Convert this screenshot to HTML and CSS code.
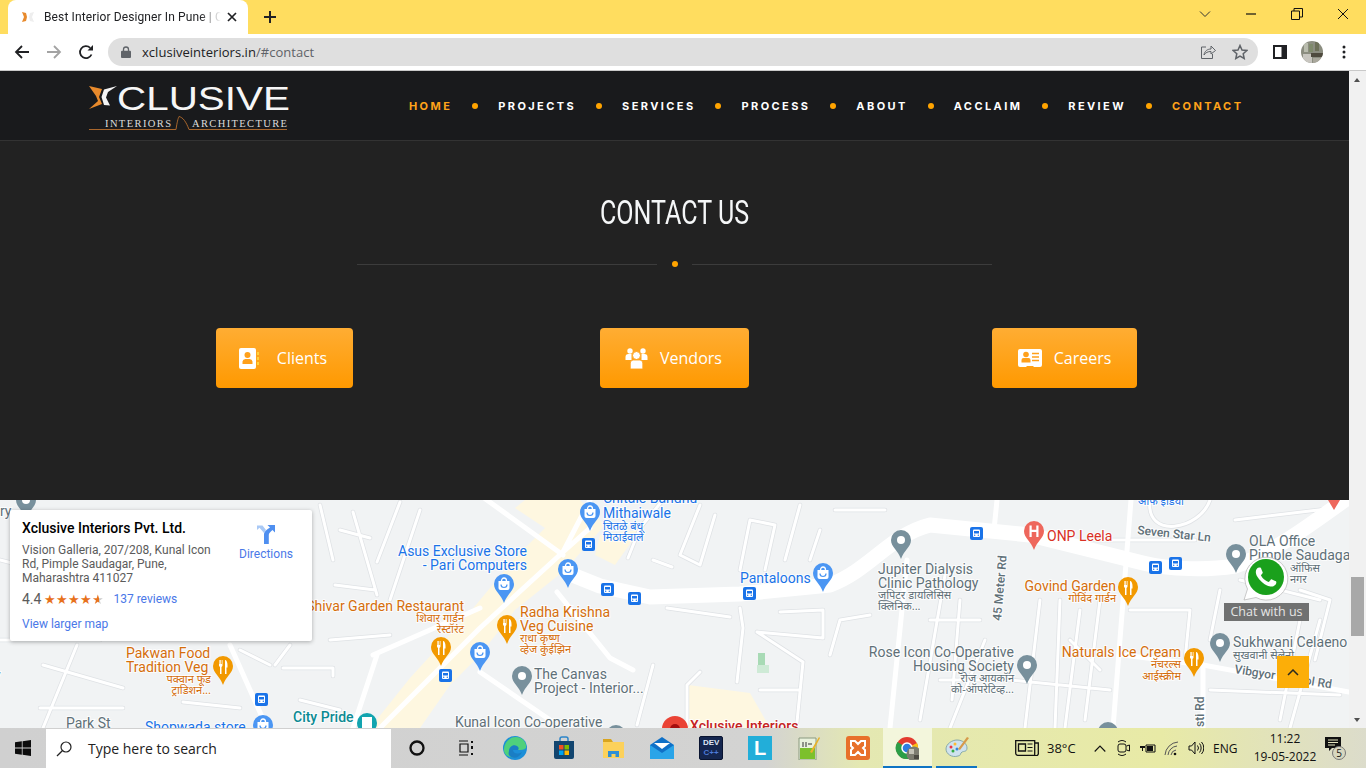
FILE: index.html
```html
<!DOCTYPE html>
<html lang="en">
<head>
<meta charset="utf-8">
<title>Best Interior Designer In Pune | Contact</title>
<link rel="stylesheet" href="styles.css">
</head>
<body>
<svg class="defs" width="0" height="0" aria-hidden="true">
  <defs>
    <path id="drop" d="M10 0a10 10 0 0 1 10 10c0 7-7 10-10 19C7 20 0 17 0 10A10 10 0 0 1 10 0z"/>
    <g id="pin-shop"><use href="#drop" fill="#4b96f3"/><path d="M4.5 7h11v7a2 2 0 0 1-2 2h-7a2 2 0 0 1-2-2z" fill="#fff"/><path d="M7.5 7a2.5 3 0 0 1 5 0" fill="none" stroke="#fff" stroke-width="1.3"/><path d="M7 10.5a3 3 0 0 0 6 0" fill="none" stroke="#4b96f3" stroke-width="1.2"/></g>
    <g id="pin-food"><use href="#drop" fill="#f29900"/><path d="M6 4v5.5a1.6 1.6 0 0 0 1 1.4V18h1.5v-7.1a1.6 1.6 0 0 0 1-1.4V4h-.8v4h-.7V4h-.7v4h-.7V4zM12 4c1.500 0 2.500 2 2.500 5v2.500h-1V18H12z" fill="#fff"/></g>
    <g id="pin-gray"><use href="#drop" fill="#78909c"/><circle cx="10" cy="10" r="4" fill="#fff"/></g>
    <g id="pin-hosp"><use href="#drop" fill="#ee675c"/><path d="M5.500 4.500h2.200v4.300h4.600V4.500h2.200V16h-2.200v-5h-4.600v5H5.500z" fill="#fff"/></g>
    <g id="bus"><rect width="13" height="13" rx="2" fill="#1a73e8"/><rect x="3" y="2.500" width="7" height="7.500" rx="1" fill="#fff"/><rect x="4" y="4" width="5" height="2.500" fill="#1a73e8"/><circle cx="4.700" cy="8.300" r=".7" fill="#1a73e8"/><circle cx="8.300" cy="8.300" r=".7" fill="#1a73e8"/></g>
    <g id="roads-thin">
      <path d="M628 558l12-30 27-33M653 560l19 7M667 608l63 9M740 608l3 20-6 54M780 612l43-2v28l-66-6M803 662l-6 60M757 632l46 30M687 685v40M653 665l-16 60M700 672l-13 13M760 690h40M740 570l10-50 25 5-10 45M800 505l-15 55M700 505l-20 50 20 10 15-50M835 510h50M820 530l-10 30M870 615l-30 5-10 35"/>
      <path d="M77 645l-34 83M43 665l80 23M40 708h83M183 702l57 6M320 505l13 55M353 512l24 83M400 502l-23 60M420 510l-30 90M275 665l15-20M283 668h50v8M300 700l40 10M240 650l30 15M0 640h100M0 560l12 3M330 640l60-5M340 530l30 8M335 585l40 5"/>
      <path d="M945 575l-25 145M960 600l-8 100M985 640l-35 88M1040 600l-15 128M1060 600l-5 128M1080 610l-15 118M1100 600l-15 120M1010 680l100 10M1130 610h60l-5 50M1220 590l-10 50M1300 620l-20 100M1320 620l-30 108M1240 580l80 20M1210 690l130 5M1070 640l30 30M930 620h50M940 680h70"/>
      <path d="M1150 500c-5 40 50 30 60 0M1235 520l100-12M1095 540h100M1300 590l30 10-15 60"/>
    </g>
  </defs>
</svg>

<header class="tabstrip">
  <div class="tab">
    <svg class="favicon" viewBox="0 0 14 14"><path d="M1 2l4 1 1 4-1 4-4 1 2-5z" fill="#e88a2c"/><path d="M13 2l-4 1-1 4 1 4 4 1-2-5z" fill="#eee"/></svg>
    <span class="tab-title">Best Interior Designer In Pune | Contact</span>
    <svg class="tab-close" viewBox="0 0 10 10"><path d="M1 1l8 8M9 1l-8 8" stroke="#202124" stroke-width="1.700"/></svg>
  </div>
  <svg class="new-tab" viewBox="0 0 12 12"><path d="M6 0v12M0 6h12" stroke="#202124" stroke-width="2"/></svg>
  <div class="win-controls">
    <svg class="win-icon" viewBox="0 0 12 12"><path d="M1 3.500l5 5 5-5" fill="none" stroke="#333" stroke-width="1"/></svg>
    <svg class="win-icon" viewBox="0 0 12 12"><path d="M1 6h10" stroke="#111" stroke-width="1.200"/></svg>
    <svg class="win-icon" viewBox="0 0 12 12"><path d="M.5 3h8v8.500h-8zM3 3V.5h8.500V9H8.500" fill="none" stroke="#111" stroke-width="1"/></svg>
    <svg class="win-icon" viewBox="0 0 12 12"><path d="M1 1l10 10M11 1L1 11" stroke="#111" stroke-width="1"/></svg>
  </div>
</header>

<nav class="toolbar">
  <svg class="tool-icon" viewBox="0 0 16 16"><path d="M15 8H2M8 2L2 8l6 6" fill="none" stroke="#202124" stroke-width="1.800"/></svg>
  <svg class="tool-icon" viewBox="0 0 16 16"><path d="M1 8h13M8 2l6 6-6 6" fill="none" stroke="#a3a3a3" stroke-width="1.800"/></svg>
  <svg class="tool-icon" viewBox="0 0 16 16"><path d="M13.500 10.500A6 6 0 1 1 12.200 3.800" fill="none" stroke="#202124" stroke-width="1.800"/><path d="M9.500 6.500H15V1z" fill="#202124"/></svg>
  <div class="omnibox">
    <svg class="lock" viewBox="0 0 10 12"><path d="M2.500 5V3.500a2.500 2.500 0 0 1 5 0V5" fill="none" stroke="#5f6368" stroke-width="1.300"/><rect y="4.800" width="10" height="7.200" rx="1" fill="#5f6368"/></svg>
    <span class="url"><span class="url-host">xclusiveinteriors.in</span>/#contact</span>
    <svg class="omni-icon" viewBox="0 0 16 16"><path d="M6 3H1.500v11.500h11V10" fill="none" stroke="#5f6368" stroke-width="1"/><path d="M4 11c.5-4 3.500-6 7-6V2l4.500 4.500L11 10V7.500c-3 0-5.500 1-7 3.500z" fill="none" stroke="#5f6368" stroke-width="1"/></svg>
    <svg class="omni-icon" viewBox="0 0 16 16"><path d="M8 1.500l2 4.500 4.800.5-3.600 3.200 1 4.800L8 12.100l-4.200 2.400 1-4.800L1.200 6.500 6 6z" fill="none" stroke="#5f6368" stroke-width="1.500"/></svg>
  </div>
  <svg class="side-icon" viewBox="0 0 14 14"><path d="M0 0h14v14H0zM2 2v10h6.500V2z" fill="#202124" fill-rule="evenodd"/></svg>
  <svg class="avatar" viewBox="0 0 22 22"><defs><clipPath id="av"><circle cx="11" cy="11" r="11"/></clipPath></defs><g clip-path="url(#av)"><rect width="22" height="22" fill="#8b8d80"/><rect x="3" y="2" width="4" height="9" fill="#b9bcae"/><rect x="8" y="3" width="4" height="8" fill="#7f8a6c"/><rect x="14" y="1" width="4" height="9" fill="#6d7058"/><rect x="2" y="13" width="9" height="9" fill="#c8c6c0"/><rect x="10" y="12" width="12" height="4" fill="#4e4a3e"/><rect x="12" y="17" width="10" height="5" fill="#a9a79c"/></g></svg>
  <svg class="kebab" viewBox="0 0 4 14"><circle cx="2" cy="2" r="1.500"/><circle cx="2" cy="7" r="1.500"/><circle cx="2" cy="12" r="1.500"/></svg>
</nav>

<div class="viewport">
  <main class="page">
    <div class="site-header">
      <svg class="logo" viewBox="0 0 201 45">
        <path d="M0 1l13 3-3 8 3 7L0 24l9-8-2-5z" fill="#e88a2c"/>
        <path d="M28 1L15 4.500 12.500 12 15 20l6 .5L17 12.500 19 7z" fill="#f4f4f4"/>
        <text class="logo-word" x="28" y="25" textLength="173" lengthAdjust="spacingAndGlyphs">CLUSIVE</text>
        <text class="logo-sub" x="16" y="42" textLength="66">INTERIORS</text>
        <text class="logo-sub" x="103" y="42" textLength="95">ARCHITECTURE</text>
        <path d="M0 44.500h87c1-7 2-11 3-13 4 1 7 5 10 13h98" fill="none" stroke="#a8662c" stroke-width="1"/>
      </svg>
      <ul class="main-nav">
        <li class="nav-link is-active">HOME</li><li class="nav-dot"></li>
        <li class="nav-link">PROJECTS</li><li class="nav-dot"></li>
        <li class="nav-link">SERVICES</li><li class="nav-dot"></li>
        <li class="nav-link">PROCESS</li><li class="nav-dot"></li>
        <li class="nav-link">ABOUT</li><li class="nav-dot"></li>
        <li class="nav-link">ACCLAIM</li><li class="nav-dot"></li>
        <li class="nav-link">REVIEW</li><li class="nav-dot"></li>
        <li class="nav-link is-active">CONTACT</li>
      </ul>
    </div>

    <section class="contact">
      <h1 class="contact-title">CONTACT US</h1>
      <div class="divider"><span class="divider-line"></span><span class="divider-dot"></span><span class="divider-line"></span></div>
      <div class="contact-grid">
        <div class="contact-cell"><a class="cta cta-clients">
          <svg class="cta-icon cta-icon-book" viewBox="0 0 20 21"><path d="M2 0h13a2 2 0 0 1 2 2v17a2 2 0 0 1-2 2H2a2 2 0 0 1-2-2V2a2 2 0 0 1 2-2z" fill="#fff"/><path d="M18 4h2v3h-2zM18 9h2v3h-2zM18 14h2v3h-2z" fill="#ffd23c"/><circle cx="8.500" cy="7" r="3" fill="#ffa01a"/><path d="M3.500 16v-2.500A3 3 0 0 1 6.500 11h4a3 3 0 0 1 3 2.500V16z" fill="#ffa01a"/></svg>
          <span>Clients</span></a></div>
        <div class="contact-cell"><a class="cta cta-vendors">
          <svg class="cta-icon cta-icon-users" viewBox="0 0 22 21"><circle cx="4.500" cy="3" r="2.700" fill="#fff"/><circle cx="17.500" cy="3" r="2.700" fill="#fff"/><path d="M0 12V9a3 3 0 0 1 3-3h3v6zM22 12V9a3 3 0 0 0-3-3h-3v6z" fill="#fff"/><circle cx="11" cy="7.500" r="4" fill="#fff" stroke="#ffa31f"/><path d="M3.500 21V15a3.500 3.500 0 0 1 3.500-3h8a3.500 3.500 0 0 1 3.500 3v6z" fill="#fff" stroke="#ffa31f" transform="translate(1.800 0) scale(.84 1)"/></svg>
          <span>Vendors</span></a></div>
        <div class="contact-cell"><a class="cta cta-careers">
          <svg class="cta-icon cta-icon-card" viewBox="0 0 24 18"><path d="M2 0h20a2 2 0 0 1 2 2v14a2 2 0 0 1-2 2h-6l-1-1H9l-1 1H2a2 2 0 0 1-2-2V2a2 2 0 0 1 2-2z" fill="#fff"/><circle cx="8" cy="5.500" r="2.800" fill="#ffa01a"/><path d="M3.500 13.500V11a2 2 0 0 1 2-2h5a2 2 0 0 1 2 2v2.500z" fill="#ffa01a"/><path d="M14 4.500h7M14 8h7M14 11.500h7" stroke="#ffa01a" stroke-width="1.500"/></svg>
          <span>Careers</span></a></div>
      </div>
    </section>

    <section class="map">
      <svg class="map-canvas" viewBox="0 500 1349 228">
        <path class="area" d="M525 500h55l25 25-40 45-50 40-35 45-30 30-30 43h-50l40-50 55-60 50-60 30-30-30-20z"/>
        <path class="area" d="M600 535l40-5-25 35-20-10z"/>
        <path class="area" d="M688 685l62 8 20 35h-82z"/>
        <rect class="park" x="758" y="653" width="7" height="12"/>
        <rect class="park-lt" x="757" y="665" width="12" height="8"/>
        <use href="#roads-thin" class="casing-thin"/>
        <use href="#roads-thin" class="road-thin"/>
        <path class="road-main" d="M565 572l35 14 50 11 90-3 90-9c40-15 60-50 100-60l100 10 113 28c27 7 67 7 92 3 35-11 75-41 114-69"/>
        <path class="road-mid" d="M563 552l-83 76-50 50-50 50M590 528l-27 24M480 495l83 60M480 672l73 50M480 608l-107 47M590 500l-27 52"/>
        <path class="road-mid" d="M1131 500l-18 228M907 560l-17 168M997 500l-3 30M230 645l37 83M377 655l-24 73M1123 655l80 10 146 27"/>
        <path class="road-mid" d="M557 592l53 66 23 12M1203 665v63"/>

        <g class="lbl lbl-blue">
          <text x="603" y="503">Chitale Bandhu</text><text x="603" y="518">Mithaiwale</text>
          <text class="hi" x="603" y="530">चितळे बंधू</text><text class="hi" x="603" y="541">मिठाईवाले</text>
          <text class="end" x="527" y="556">Asus Exclusive Store</text><text class="end" x="527" y="570">- Pari Computers</text>
          <text x="740" y="583">Pantaloons</text>
          <text class="hi" x="1138" y="505">आफ इंडिया</text>
          <text x="145" y="732">Shopwada store</text>
        </g>
        <g class="lbl lbl-orange">
          <text class="end" x="464" y="611">Shivar Garden Restaurant</text>
          <text class="hi end" x="464" y="622">शिवार गार्डन</text><text class="hi end" x="464" y="633">रेस्टॉरंट</text>
          <text x="126" y="658">Pakwan Food</text><text x="126" y="672">Tradition Veg</text>
          <text class="hi end" x="211" y="683">पक्वान फूड</text><text class="hi end" x="211" y="694">ट्राडिशन...</text>
          <text x="520" y="617">Radha Krishna</text><text x="520" y="631">Veg Cuisine</text>
          <text class="hi" x="520" y="642">राधा कृष्ण</text><text class="hi" x="520" y="653">व्हेज कुईझिन</text>
          <text class="end" x="1116" y="591">Govind Garden</text><text class="hi end" x="1116" y="602">गोविंद गार्डन</text>
          <text class="end" x="1181" y="657">Naturals Ice Cream</text>
          <text class="hi end" x="1181" y="668">नॅचरल्स</text><text class="hi end" x="1181" y="680">आईस्क्रीम</text>
        </g>
        <g class="lbl lbl-gray">
          <text x="534" y="679">The Canvas</text><text x="534" y="693">Project - Interior...</text>
          <text x="455" y="727">Kunal Icon Co-operative</text>
          <text x="878" y="574">Jupiter Dialysis</text><text x="878" y="588">Clinic Pathology</text>
          <text class="hi" x="878" y="599">जुपिटर डायलिसिस</text><text class="hi" x="878" y="610">क्लिनिक...</text>
          <text class="end" x="1014" y="657">Rose Icon Co-Operative</text><text class="end" x="1014" y="671">Housing Society</text>
          <text class="hi end" x="1014" y="682">रोज आयकॉन</text><text class="hi end" x="1014" y="693">को-ऑपरेटिव्ह...</text>
          <text x="1249" y="546">OLA Office</text><text x="1249" y="560">Pimple Saudaga</text>
          <text class="hi" x="1290" y="572">ऑफिस</text><text class="hi" x="1290" y="583">नगर</text>
          <text x="1233" y="647">Sukhwani Celaeno</text><text class="hi" x="1233" y="659">सुखवानी सेलेनो</text>
          <text x="66" y="728">Park St</text>
          <text x="-8" y="516">ory</text><text x="-6" y="680">y</text>
          <text class="road-name" transform="translate(1137 534) rotate(6)">Seven Star Ln</text>
          <text class="road-name" transform="translate(1001 621) rotate(-85)">45 Meter Rd</text>
          <text class="road-name" transform="translate(1234 673) rotate(9)">Vibgyor School Rd</text>
          <text class="road-name" transform="translate(1204 727) rotate(-90)">sti Rd</text>
        </g>
        <text class="lbl-red" x="1047" y="541">ONP Leela</text>
        <text class="lbl-red lbl-dark" x="690" y="731">Xclusive Interiors</text>
        <text class="lbl-teal" x="293" y="722">City Pride</text>

        <use href="#pin-shop" x="580" y="502"/><use href="#pin-shop" x="558" y="559"/><use href="#pin-shop" x="494" y="574"/><use href="#pin-shop" x="470" y="642"/><use href="#pin-shop" x="253" y="715"/><use href="#pin-shop" x="813" y="563"/>
        <use href="#pin-food" x="497" y="615"/><use href="#pin-food" x="431" y="637"/><use href="#pin-food" x="213" y="656"/><use href="#pin-food" x="1118" y="577"/><use href="#pin-food" x="1184" y="648"/>
        <use href="#pin-gray" x="512" y="666"/><use href="#pin-gray" x="891" y="530"/><use href="#pin-gray" x="1017" y="655"/><use href="#pin-gray" x="1226" y="544"/><use href="#pin-gray" x="1210" y="633"/><use href="#pin-gray" x="16" y="490"/><use href="#pin-gray" x="606" y="725"/><use href="#pin-gray" x="1098" y="722"/>
        <use href="#pin-hosp" x="1024" y="521"/>
        <path d="M1328 500h12l-6 10z" fill="#ee675c"/>
        <circle cx="675" cy="729" r="13" fill="#ea4335"/><circle cx="675" cy="729" r="5" fill="#a50e0e"/>
        <circle cx="367" cy="723" r="10" fill="#12a4af"/><rect x="362" y="717" width="10" height="11" fill="#fff"/>
        <use href="#bus" x="582" y="538"/><use href="#bus" x="601" y="583"/><use href="#bus" x="628" y="592"/><use href="#bus" x="743" y="587"/><use href="#bus" x="970" y="527"/><use href="#bus" x="1149" y="561"/><use href="#bus" x="1169" y="557"/><use href="#bus" x="255" y="693"/><use href="#bus" x="439" y="669"/>
      </svg>

      <article class="place-card">
        <div class="place-main">
          <h2 class="place-name">Xclusive Interiors Pvt. Ltd.</h2>
          <p class="place-address">Vision Galleria, 207/208, Kunal Icon Rd, Pimple Saudagar, Pune, Maharashtra 411027</p>
          <div class="place-rating">
            <span class="rating-num">4.4</span>
            <span class="stars">★★★★<span class="star-half">★</span></span>
            <a class="place-link place-reviews">137 reviews</a>
          </div>
          <a class="place-link place-larger">View larger map</a>
        </div>
        <div class="place-dir">
          <svg class="dir-icon" viewBox="0 0 20 20"><path d="M1 1.500h5.500L10 6 8 9 3.500 3.800 1 6z" fill="#a9c9f6"/><path d="M8 20V10.500c0-3 3-5 6-7L11.500 1H19v7.500L16.500 6C14 8 12.800 9.500 12.800 11V20z" fill="#4f8ff0"/></svg>
          <a class="place-link">Directions</a>
        </div>
      </article>

      <div class="wa">
        <svg class="wa-icon" viewBox="0 0 46 46"><path d="M1 45l3.500-11A21.500 21.500 0 1 1 13 42.500z" fill="#fff" stroke="#bdbdbd" stroke-width=".8"/><circle cx="23" cy="22" r="18" fill="#1aa01c"/><g transform="translate(2.600 1.600) scale(1.700)"><path fill="#fff" d="M17.472 14.382c-.297-.149-1.758-.867-2.03-.967-.273-.099-.471-.148-.67.15-.197.297-.767.966-.94 1.164-.173.199-.347.223-.644.075-.297-.15-1.255-.463-2.39-1.475-.883-.788-1.48-1.761-1.653-2.059-.173-.297-.018-.458.13-.606.134-.133.298-.347.446-.52.149-.174.198-.298.298-.497.099-.198.05-.371-.025-.52-.075-.149-.669-1.612-.916-2.207-.242-.579-.487-.5-.669-.51-.173-.008-.371-.01-.57-.01-.198 0-.52.074-.792.372-.272.297-1.04 1.016-1.04 2.479 0 1.462 1.065 2.875 1.213 3.074.149.198 2.096 3.2 5.077 4.487.709.306 1.262.489 1.694.625.712.227 1.36.195 1.871.118.571-.085 1.758-.719 2.006-1.413.248-.694.248-1.289.173-1.413-.074-.124-.272-.198-.57-.347"/></g></svg>
        <span class="wa-label">Chat with us</span>
      </div>
      <a class="to-top"><svg class="to-top-icon" viewBox="0 0 12 7"><path d="M1 6l5-5 5 5" fill="none" stroke="#2a2a20" stroke-width="1.500"/></svg></a>
    </section>
  </main>
  <aside class="scrollbar">
    <span class="sb-up"></span>
    <span class="sb-thumb"></span>
    <span class="sb-down"></span>
  </aside>
</div>

<footer class="taskbar">
  <svg class="start" viewBox="0 0 16 16"><path d="M0 2.300l6.800-1v6.300H0zM7.600 1.200L16 0v7.600H7.600zM0 8.400h6.800v6.300l-6.800-1zM7.600 8.400H16V16l-8.400-1.200z" fill="#0c0c0c"/></svg>
  <div class="search">
    <svg class="search-icon" viewBox="0 0 16 16"><circle cx="10" cy="6" r="5" fill="none" stroke="#222" stroke-width="1.200"/><path d="M6.300 9.700L1 15" stroke="#222" stroke-width="1.300"/></svg>
    <span>Type here to search</span>
  </div>
  <div class="task-item"><svg class="ti ti-cortana" viewBox="0 0 16 16"><circle cx="8" cy="8" r="6.500" fill="none" stroke="#111" stroke-width="2.300"/></svg></div>
  <div class="task-item"><svg class="ti ti-cortana" viewBox="0 0 16 16"><path d="M1 1h9M1 15h9M2 4h8v8H2z" fill="none" stroke="#111" stroke-width="1.200"/><path d="M13 1h2v2h-2zM13 6h2v3h-2zM13 13h2v2h-2z" fill="#111"/></svg></div>
  <div class="task-item"><svg class="ti" viewBox="0 0 24 24"><circle cx="12" cy="12" r="12" fill="#1c8fd8"/><path d="M1 14C1 7 6 1 13 1c6 0 11 5 10 11-2 2-5 2-8 2-1-3-6-4-8-1-1 3 1 6 4 8-5 1-10-2-10-7z" fill="#4fd07c"/><path d="M6 15c0-4 4-7 8-5 2 1 2 3 1 4h-5c0 3 4 5 9 2-2 5-7 7-11 5-2-1-3-3-2-6z" fill="#1a7ec4"/></svg></div>
  <div class="task-item"><svg class="ti" viewBox="0 0 24 24"><path d="M8 5V3a2 2 0 0 1 2-2h4a2 2 0 0 1 2 2v2" fill="none" stroke="#2c85c9" stroke-width="1.500"/><path d="M2 5h20v16a2 2 0 0 1-2 2H4a2 2 0 0 1-2-2z" fill="#12456f"/><rect x="7" y="9" width="4.500" height="4.500" fill="#f25022"/><rect x="12.500" y="9" width="4.500" height="4.500" fill="#7fba00"/><rect x="7" y="14.500" width="4.500" height="4.500" fill="#00a4ef"/><rect x="12.500" y="14.500" width="4.500" height="4.500" fill="#ffb900"/></svg></div>
  <div class="task-item"><svg class="ti" viewBox="0 0 24 24"><path d="M2 3h8l2 3H2z" fill="#d9a520"/><rect x="2" y="6" width="21" height="16" fill="#fcd15b"/><path d="M7 21v-6h11v6h-3.500v-3h-4v3z" fill="#2f8fd6"/></svg></div>
  <div class="task-item"><svg class="ti" viewBox="0 0 24 24"><path d="M0 9l12-8 12 8v14H0z" fill="#0f70c7"/><path d="M0 9l12 8 12-8v14H0z" fill="#2aa4e8"/><path d="M4 7h16l-8 6z" fill="#fff"/></svg></div>
  <div class="task-item"><div class="dev-icon"><span>DEV</span><span class="dev-c">C++</span></div></div>
  <div class="task-item"><div class="l-icon">L</div></div>
  <div class="task-item"><svg class="ti" viewBox="0 0 24 24"><path d="M2 2h17v22H2z" fill="#e9f1dc" stroke="#8a9a80"/><path d="M3 12h15v11H3z" fill="#7cc02c"/><path d="M6 6v5M9 6v5M11 8h4" stroke="#333" stroke-width="1"/><path d="M13 16L22 1l1 1-8 15z" fill="#e8b22a"/></svg></div>
  <div class="task-item"><svg class="ti" viewBox="0 0 24 24"><rect width="24" height="24" rx="3" fill="#e8702a"/><path d="M5 5h4l3 3 3-3h4v5l-2 2 2 2v5h-4l-3-3-3 3H5v-5l2-2-2-2z" fill="none" stroke="#fff" stroke-width="2"/></svg></div>
  <div class="task-item is-running is-focus">
    <svg class="ti" viewBox="0 0 24 24"><circle cx="12" cy="12" r="11" fill="#e33b2e"/><path d="M12 12L22 7a11 11 0 0 1-8 15.800z" fill="#fbc116"/><path d="M12 12l2 10.800A11 11 0 0 1 2.500 6z" fill="#2c9e47"/><circle cx="12" cy="12" r="5" fill="#2f7de1" stroke="#fff" stroke-width="1.500"/><circle cx="19" cy="18" r="7.500" fill="#7d7c70"/><rect x="14" y="13" width="5" height="5" fill="#c4c2b6"/><rect x="19" y="19" width="5" height="4" fill="#4c4a42"/></svg>
  </div>
  <div class="task-item is-running">
    <svg class="ti" viewBox="0 0 24 24"><path d="M1 13c0-5 6-9 11-9 6 0 10 4 10 8 0 4-3 3-5 4-2 1-1 4-4 4-6 2-12-2-12-7z" fill="#cfe2ee" stroke="#8aa"/><circle cx="6" cy="11" r="1.500" fill="#e34"/><circle cx="10" cy="8" r="1.500" fill="#fb3"/><circle cx="8" cy="15" r="1.500" fill="#3a4"/><circle cx="12" cy="13" r="1.500" fill="#38d"/><path d="M22 1l2 1-9 12-2-1z" fill="#d69a4a"/></svg>
  </div>
  <div class="tray">
    <svg class="tray-news" viewBox="0 0 24 16"><path d="M.7.700h19v14.600H3a2 2 0 0 1-2.300-2zM19.700 3h3.600v10a2.300 2.300 0 0 1-3.600 2.300" fill="none" stroke="#111" stroke-width="1.300"/><path d="M3.500 4h7v7h-7z" fill="none" stroke="#111" stroke-width="1.300"/><path d="M12.500 4h5M12.500 7.500h5M12.500 11h5" stroke="#111"/></svg>
    <span class="tray-temp">38°C</span>
    <svg class="tray-chev" viewBox="0 0 12 7"><path d="M.7 6.500L6 1l5.300 5.500" fill="none" stroke="#111" stroke-width="1.100"/></svg>
    <svg class="tray-i" viewBox="0 0 16 16"><rect x="2" y="4" width="8" height="8" rx="2" fill="none" stroke="#111"/><path d="M10.500 6l3-1v6l-3-1M2 2c3-2 5-2 8 0M2 14c3 2 5 2 8 0" fill="none" stroke="#111"/></svg>
    <svg class="tray-i" viewBox="0 0 16 16"><path d="M6 5h9v7H6z" fill="none" stroke="#111"/><path d="M7 6h6v5H7z" fill="#111"/><path d="M1 6V3M4 6V3M0 6h5v2H3v3H2V8H0z" fill="#111"/></svg>
    <svg class="tray-i" viewBox="0 0 16 16"><path d="M1 15a14 14 0 0 1 13-13M4 15a10 10 0 0 1 9-9M7 15a6 6 0 0 1 5-5" fill="none" stroke="#555"/><circle cx="11" cy="14" r="1.300" fill="#111"/></svg>
    <svg class="tray-i" viewBox="0 0 16 16"><path d="M1 6h2.500L7 2v12l-3.500-4H1zM9.500 5.500a4 4 0 0 1 0 5M11.500 3.500a7 7 0 0 1 0 9M13.500 2a9 9 0 0 1 0 12" fill="none" stroke="#111"/></svg>
    <span class="tray-lang">ENG</span>
    <div class="clock"><span>11:22</span><span>19-05-2022</span></div>
    <div class="notif">
      <svg class="notif-icon" viewBox="0 0 16 16"><path d="M0 1h16v11H7l-3 3v-3H0z" fill="#111"/><path d="M3 4h10M3 6.500h10M3 9h7" stroke="#e6e6c0"/></svg>
      <span class="notif-badge">5</span>
    </div>
  </div>
</footer>
</body>
</html>
```
FILE: styles.css
```css
* { box-sizing: border-box; }
html, body { margin: 0; padding: 0; height: 100%; }
body {
  width: 1366px;
  height: 768px;
  overflow: hidden;
  display: flex;
  flex-direction: column;
  font-family: "Open Sans", "Noto Sans", sans-serif;
  background: #fff;
}
.defs { position: absolute; }
a { color: inherit; text-decoration: none; }
ul { list-style: none; margin: 0; padding: 0; }
h1, h2, p { margin: 0; }

/* browser chrome */
.tabstrip {
  height: 34px;
  flex: none;
  display: flex;
  align-items: center;
  padding-left: 8px;
  background: #ffdd5f;
}
.tab {
  width: 240px;
  height: 34px;
  align-self: flex-end;
  display: flex;
  align-items: center;
  padding: 0 10px 0 13px;
  background: #fff;
  border-radius: 8px 8px 0 0;
}
.favicon { width: 14px; height: 14px; flex: none; }
.tab-title {
  flex: 1;
  margin-left: 9px;
  font: 12px/16px Roboto, sans-serif;
  letter-spacing: .12px;
  color: #202124;
  white-space: nowrap;
  overflow: hidden;
  -webkit-mask-image: linear-gradient(90deg, #000 88%, transparent 100%);
  mask-image: linear-gradient(90deg, #000 88%, transparent 100%);
}
.tab-close { width: 10px; height: 10px; margin: 0 1px 0 6px; flex: none; }
.new-tab { width: 12px; height: 12px; margin-left: 16px; flex: none; }
.win-controls { margin-left: auto; display: flex; align-items: center; gap: 34px; height: 100%; margin-top: -6px; margin-right: 17px; }
.win-icon { width: 12px; height: 12px; flex: none; }

.toolbar {
  height: 37px;
  flex: none;
  display: flex;
  align-items: center;
  padding: 0 0 1px 14px;
  background: #fff;
  border-bottom: 1px solid #c9c9c9;
}
.tool-icon { width: 16px; height: 16px; margin-right: 16px; flex: none; }
.tool-icon:nth-child(3) { margin-right: 14px; }
.omnibox {
  width: 1150px;
  height: 28px;
  flex: none;
  display: flex;
  align-items: center;
  padding: 0 10px 0 13px;
  background: #dfdfdf;
  border-radius: 14px;
}
.lock { width: 10px; height: 12px; flex: none; }
.url { margin-left: 11px; font-size: 13px; letter-spacing: .03px; color: #5f6368; flex: 1; white-space: nowrap; }
.url-host { color: #202124; }
.omni-icon { width: 16px; height: 16px; margin-left: 16px; flex: none; }
.side-icon { width: 14px; height: 14px; margin-left: 15px; flex: none; }
.avatar { width: 22px; height: 22px; margin-left: 14px; flex: none; }
.kebab { width: 4px; height: 14px; margin-left: 19px; flex: none; fill: #202124; }

/* page */
.viewport { height: 657px; flex: none; display: flex; }
.page { width: 1349px; flex: none; display: flex; flex-direction: column; }
.site-header {
  height: 70px;
  flex: none;
  display: flex;
  align-items: center;
  padding-left: 89px;
  background: #191a1c;
  border-bottom: 1px solid #333;
}
.logo { width: 201px; height: 45px; flex: none; margin-top: 4px; }
.logo-word { font: 400 33px "Liberation Sans", sans-serif; fill: #f6f6f6; }
.logo-sub { font: 400 10.500px "Liberation Serif", serif; fill: #ddd; }
.main-nav { display: flex; align-items: center; margin-left: 119px; gap: 20px; }
.nav-link {
  font: 700 11px/14px Inter, "Liberation Sans", sans-serif;
  letter-spacing: 2.4px;
  color: #fff;
  white-space: nowrap;
}
.nav-link.is-active { color: #ffa31a; }
.nav-dot { width: 6px; height: 6px; border-radius: 50%; background: #ffa400; flex: none; }

.contact { height: 359px; flex: none; padding-top: 50px; background: #222; }
.contact-title {
  height: 44px;
  text-align: center;
  font: 400 33px/44px Roboto, sans-serif;
  color: #f5f7f8;
  transform: scaleX(.76);
}
.divider { display: flex; align-items: center; justify-content: center; margin-top: 28px; height: 2px; }
.divider-line { width: 300px; height: 1px; background: #3c3c3c; }
.divider-dot { width: 6px; height: 6px; border-radius: 50%; background: #ffa400; margin: 0 14px 0 15px; }
.contact-grid {
  width: 1170px;
  margin: 63px auto 0;
  display: grid;
  grid-template-columns: repeat(3, 1fr);
}
.contact-cell { display: flex; justify-content: center; }
.cta {
  height: 60px;
  display: flex;
  align-items: center;
  padding-right: 26px;
  border-radius: 4px;
  background: linear-gradient(180deg, #ffad33 0%, #ff9900 100%);
  color: #fff;
  font-size: 16px;
}
.cta-clients { padding-left: 23px; }
.cta-vendors { padding-left: 25px; padding-right: 27px; }
.cta-careers { padding-left: 26px; padding-right: 26px; }
.cta-icon { height: 21px; width: 20px; flex: none; }
.cta-icon-book { margin-right: 18px; }
.cta-icon-users { width: 23px; margin-right: 12px; }
.cta-icon-card { width: 24px; height: 18px; margin-right: 12px; }

/* map */
.map { height: 228px; flex: none; position: relative; overflow: hidden; background: #f1f3f4; }
.map-canvas { display: block; width: 1349px; height: 228px; }
.area { fill: #fef7e0; }
.park { fill: #a8dab5; }
.park-lt { fill: #ceead6; }
.road-main { fill: none; stroke: #fff; stroke-width: 15; stroke-linejoin: round; }
.road-mid { fill: none; stroke: #fff; stroke-width: 5; stroke-linecap: round; stroke-linejoin: round; }
.casing-thin { fill: none; stroke: #dfe2e5; stroke-width: 4.500; stroke-linecap: round; stroke-linejoin: round; }
.road-thin { fill: none; stroke: #fff; stroke-width: 3; stroke-linecap: round; stroke-linejoin: round; }
.lbl text, .lbl-red, .lbl-teal {
  font: 400 14px Roboto, sans-serif;
  paint-order: stroke;
  stroke: #fff;
  stroke-width: 2px;
  stroke-opacity: .8;
}
.lbl text.hi { font: 400 11px "Noto Sans", Roboto, sans-serif; }
.lbl text.end { text-anchor: end; }
.lbl text.road-name { font-size: 12px; font-weight: 500; }
.lbl-blue text { fill: #1a73e8; }
.lbl-orange text { fill: #d56e0c; }
.lbl-gray text { fill: #5f7078; }
.lbl-red { fill: #d93025; }
.lbl-dark { fill: #c5221f; font-weight: 500; }
.lbl-teal { fill: #0b8a93; font-weight: 500; }

.place-card {
  position: absolute;
  left: 10px;
  top: 10px;
  width: 302px;
  height: 131px;
  display: flex;
  padding: 9px 12px;
  background: #fff;
  border-radius: 2px;
  box-shadow: 0 1px 4px rgba(0, 0, 0, .3);
  font-family: Roboto, sans-serif;
  font-size: 12px;
}
.place-main { width: 200px; flex: none; }
.place-name { font: 500 14px/18px Roboto, sans-serif; color: #000; white-space: nowrap; }
.place-address { margin-top: 6px; line-height: 14px; color: #5b5b5b; }
.place-rating { display: flex; align-items: center; margin-top: 6px; height: 16px; }
.rating-num { font-size: 14px; color: #5b5b5b; }
.stars { margin-left: 3px; font-size: 12.500px; letter-spacing: -.2px; color: #e7711b; white-space: nowrap; }
.star-half { background: linear-gradient(90deg, #e7711b 60%, #c8c8c8 60%); -webkit-background-clip: text; background-clip: text; color: transparent; }
.place-reviews { margin-left: 10px; }
.place-link { color: #4a78e8; white-space: nowrap; }
.place-larger { display: block; margin-top: 10px; }
.place-dir { margin-left: 14px; display: flex; flex-direction: column; align-items: center; padding-top: 5px; width: 60px; }
.dir-icon { width: 20px; height: 20px; margin-bottom: 3px; }

.wa { position: absolute; left: 1224px; top: 55px; width: 85px; display: flex; flex-direction: column; align-items: center; }
.wa-icon { width: 46px; height: 46px; margin-left: -1px; }
.wa-label {
  margin-top: 2px;
  width: 85px;
  height: 18px;
  text-align: center;
  font: 12.500px/18px "Open Sans", sans-serif;
  color: #e6e6e6;
  background: rgba(80, 80, 80, .8);
}
.to-top {
  position: absolute;
  left: 1277px;
  top: 156px;
  width: 32px;
  height: 32px;
  display: flex;
  align-items: center;
  justify-content: center;
  background: #fcae08;
}
.to-top-icon { width: 12px; height: 7px; }

/* scrollbar */
.scrollbar {
  width: 17px;
  flex: none;
  background: #f1f1f1;
  position: relative;
}
.sb-up, .sb-down { position: absolute; left: 5px; width: 0; height: 0; border-left: 3.500px solid transparent; border-right: 3.500px solid transparent; }
.sb-up { top: 7px; border-bottom: 4px solid #505050; }
.sb-down { bottom: 6px; border-top: 4px solid #505050; }
.sb-thumb { position: absolute; left: 2px; top: 506px; width: 13px; height: 59px; background: #a8a8a8; }

/* taskbar */
.taskbar {
  height: 40px;
  flex: none;
  display: flex;
  align-items: center;
  background: linear-gradient(90deg, #d0d0d0 0%, #d3d3d2 56%, #e4e8b2 63%, #e8eaa6 85%, #dcdccb 100%);
  padding-left: 15px;
}
.start { width: 16px; height: 16px; flex: none; }
.search {
  width: 345px;
  height: 40px;
  margin-left: 15px;
  flex: none;
  display: flex;
  align-items: center;
  padding-left: 10px;
  background: #fff;
  border-top: 1px solid #d0d0d0;
  font-size: 14px;
  color: #222;
}
.search-icon { width: 16px; height: 16px; margin-right: 16px; flex: none; }
.task-item { width: 49.100px; height: 40px; flex: none; display: flex; align-items: center; justify-content: center; }
.search + .task-item { margin-left: 1px; }
.is-focus { background: #f3f6dc; }
.is-running { box-shadow: inset 0 -2px 0 #0f74c4; }
.is-running:not(.is-focus) { width: 41px; margin-left: 4px; }
.ti { width: 24px; height: 24px; }
.ti-cortana { width: 16px; height: 16px; }
.dev-icon {
  width: 24px;
  height: 24px;
  display: flex;
  flex-direction: column;
  align-items: center;
  justify-content: center;
  background: #15264f;
  border: 1px solid #0a1430;
  border-radius: 2px;
  font: 700 8px/10px "Liberation Sans", sans-serif;
  color: #dfe7f7;
}
.dev-c { color: #4d7bd8; }
.l-icon {
  width: 24px;
  height: 24px;
  background: #22aed9;
  color: #fff;
  font: 700 20px/24px "Liberation Sans", sans-serif;
  text-align: center;
}
.tray { margin-left: auto; display: flex; align-items: center; height: 40px; padding-right: 23px; font-size: 12.500px; color: #111; }
.tray-news { width: 24px; height: 16px; flex: none; }
.tray-temp { margin-left: 8px; width: 41px; font-size: 13px; }
.tray-chev { width: 12px; height: 7px; margin-left: 6px; flex: none; }
.tray-i { width: 16px; height: 16px; margin-left: 8px; flex: none; }
.tray-chev + .tray-i { margin-left: 10px; }
.tray-lang { margin-left: 9px; width: 25px; font-size: 12px; }
.clock { width: 70px; margin-left: 12px; display: flex; flex-direction: column; align-items: center; font-size: 12px; line-height: 18px; }
.notif { position: relative; margin-left: 5px; width: 18px; height: 24px; }
.notif-icon { width: 16px; height: 16px; }
.notif-badge {
  position: absolute;
  left: 7px;
  top: 10px;
  width: 14px;
  height: 14px;
  border-radius: 50%;
  border: 1px solid #777;
  background: #d8d8c0;
  font-size: 10px;
  line-height: 12px;
  text-align: center;
}
```
